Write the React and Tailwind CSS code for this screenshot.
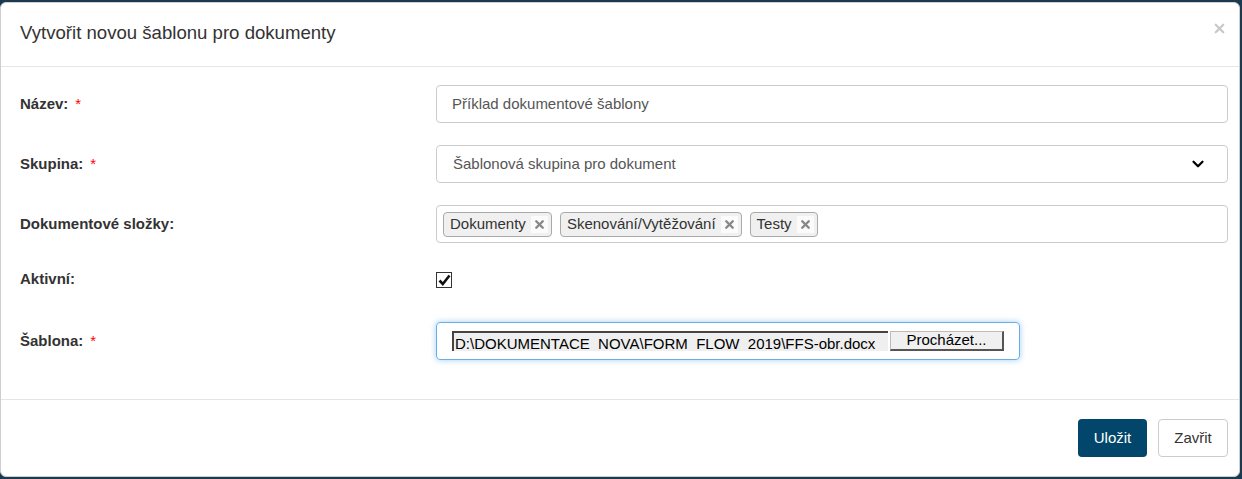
import { X, ChevronDown } from "lucide-react";

const tags = ["Dokumenty", "Skenování/Vytěžování", "Testy"];

const Label = ({ children, required, className = "" }) => (
	<div className={`w-[416px] shrink-0 text-[15px] font-bold text-[#333] ${className}`}>
		{children}
		{required && <span className="ml-[7px] text-[#ff0000] font-normal">*</span>}
	</div>
);

const App = () => {
	return (
		<div className="w-[1242px] h-[479px] bg-[#1b3a4f] pt-[2px] pb-[2px] pr-[2px] font-['Liberation_Sans',Arial,sans-serif] overflow-hidden">
			<div className="h-[475px] w-[1240px] bg-white rounded-[6px] border border-[#cfcfcf] flex flex-col">
				{/* Header */}
				<div className="h-[64px] border-b border-[#e5e5e5] flex items-center justify-between pl-[19px] pr-[12px] shrink-0">
					<h4 className="text-[18.6px] text-[#333] leading-none mt-[-2px]">Vytvořit novou šablonu pro dokumenty</h4>
					<X size={15} strokeWidth={3.5} className="text-[#c8c8c8] mt-[-12px]" />
				</div>

				{/* Body */}
				<div className="flex-1 pl-[19px] pr-[11px] pt-[18px]">
					<div className="flex items-center h-[38px] mb-[22px]">
						<Label required>Název:</Label>
						<div className="flex-1 h-[38px] border border-[#ccc] rounded-[4px] flex items-center px-[15px] text-[15px] text-[#555]">
							Příklad dokumentové šablony
						</div>
					</div>

					<div className="flex items-center h-[38px] mb-[22px]">
						<Label required>Skupina:</Label>
						<div className="flex-1 h-[38px] border border-[#ccc] rounded-[4px] flex items-center justify-between pl-[16px] pr-[20px] text-[15px] text-[#555]">
							<span>Šablonová skupina pro dokument</span>
							<ChevronDown size={18} strokeWidth={3} className="text-black" />
						</div>
					</div>

					<div className="flex items-center h-[38px] mb-[22px]">
						<Label>Dokumentové složky:</Label>
						<div className="flex-1 h-[38px] border border-[#ccc] rounded-[4px] flex items-center gap-[8px] pl-[6px]">
							{tags.map((t) => (
								<div
									key={t}
									className="h-[25px] flex items-center gap-[5px] pl-[6px] pr-[3px] border border-[#aaa] rounded-[4px] bg-[#f0f0f0] text-[15px] text-[#333]"
								>
									<span>{t}</span>
									<span className="bg-[#fbfbfb] px-[2px] py-[2px]">
										<X size={13} strokeWidth={4.5} className="text-[#888]" />
									</span>
								</div>
							))}
						</div>
					</div>

					<div className="flex items-start h-[35px] mb-[22px]">
						<Label className="pt-[3px]">Aktivní:</Label>
						<div className="mt-[7px] w-[16px] h-[16px] border border-[#333] bg-white flex items-center justify-center">
							<svg width="13" height="12" viewBox="0 0 13 12">
								<path d="M1.5 6.5 L4.8 10 L11.5 1.5" fill="none" stroke="#111" strokeWidth="2.6" />
							</svg>
						</div>
					</div>

					<div className="flex items-center h-[38px]">
						<Label required>Šablona:</Label>
						<div className="w-[584px] h-[38px] border border-[#66afe9] rounded-[4px] shadow-[0_0_6px_rgba(102,175,233,0.6)] flex items-center pl-[15px] gap-[2px]">
							<div className="w-[436px] h-[20px] bg-[#efefef] border-t-2 border-l-2 border-[#444] overflow-hidden text-[15px] leading-[21px] text-black whitespace-nowrap pl-[1px]">
								D:\DOKUMENTACE_NOVA\FORM_FLOW_2019\FFS-obr.docx
							</div>
							<div className="w-[114px] h-[20px] bg-[#f0f0f0] border border-[#bbb] border-b-2 border-r-2 border-b-[#555] border-r-[#555] flex items-center justify-center text-[15px] text-black">
								Procházet...
							</div>
						</div>
					</div>
				</div>

				{/* Footer */}
				<div className="h-[77px] border-t border-[#e5e5e5] flex items-center justify-end gap-[11px] pr-[11px] shrink-0">
					<button className="h-[38px] w-[69px] rounded-[4px] bg-[#02466b] text-white text-[15px]">Uložit</button>
					<button className="h-[38px] w-[70px] rounded-[4px] bg-white border border-[#ccc] text-[#333] text-[15px]">Zavřit</button>
				</div>
			</div>
		</div>
	);
};

export default App;
